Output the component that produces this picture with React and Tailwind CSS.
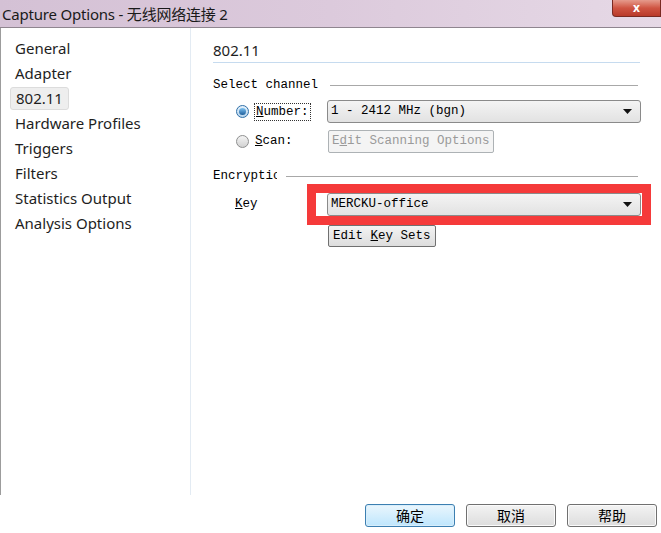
import React from 'react';

const sans = { fontFamily: '"Noto Sans", "Noto Sans CJK SC", sans-serif' };
const mono = { fontFamily: '"Liberation Mono", "Noto Sans CJK SC", monospace' };

const navItems = [
  'General',
  'Adapter',
  '802.11',
  'Hardware Profiles',
  'Triggers',
  'Filters',
  'Statistics Output',
  'Analysis Options',
];

function Radio({ checked }) {
  return (
    <span
      className={`w-[13px] h-[13px] rounded-full border flex items-center justify-center shrink-0 ${
        checked
          ? 'border-[#2f6fa8] bg-gradient-to-b from-[#e6f2fb] to-[#b9d6ee]'
          : 'border-[#8e8f8f] bg-gradient-to-b from-[#f4f4f4] to-[#d2d2d2]'
      }`}
    >
      {checked && (
        <span className="w-[7px] h-[7px] rounded-full bg-gradient-to-b from-[#7fc3f2] to-[#1d5f9c]" />
      )}
    </span>
  );
}

function Select({ value }) {
  return (
    <div className="flex-1 h-[23px] border border-[#8a8a8a] rounded-[3px] bg-gradient-to-b from-[#f4f4f4] to-[#e2e2e2] flex items-center pl-[3px] pr-[8px] text-[12.5px] text-black">
      <span className="flex-1">{value}</span>
      <svg width="9" height="5" viewBox="0 0 9 5">
        <path d="M0 0 L9 0 L4.5 5 Z" fill="#111" />
      </svg>
    </div>
  );
}

function DialogButton({ children, primary }) {
  return (
    <button
      type="button"
      className={`w-[90px] h-[23px] rounded-[3px] border text-[14px] text-black flex items-center justify-center ${
        primary
          ? 'border-[#3c7fb1] bg-gradient-to-b from-[#eaf6fd] to-[#bee6fd] shadow-[inset_0_0_0_1px_#d8eefb]'
          : 'border-[#707070] bg-gradient-to-b from-[#f3f3f3] to-[#dddddd] shadow-[inset_0_0_0_1px_#fbfbfb]'
      }`}
      style={sans}
    >
      {children}
    </button>
  );
}

export default function App() {
  return (
    <div className="w-[661px] h-[533px] flex flex-col overflow-hidden bg-white" style={sans}>
      <div className="h-[28px] shrink-0 flex bg-gradient-to-r from-[#d4c1d5] via-[#dccadc] to-[#e6d9e6] border-b border-[#8f858f]">
        <div className="pl-[2px] pt-[4px] text-[15px] leading-[20px] text-[#1a1a1a] tracking-[-0.2px]">
          Capture Options - 无线网络连接 2
        </div>
        <div className="ml-auto w-[49px] h-[17px] rounded-bl-[4px] border border-t-0 border-[#7a2a22] bg-gradient-to-b from-[#e59a8c] via-[#cf5442] to-[#b93a2a] flex items-center justify-center">
          <span className="text-white text-[12px] leading-none font-bold">x</span>
        </div>
      </div>

      <div className="flex-1 flex border-l border-[#9c9c9c]">
        <nav className="w-[190px] shrink-0 border-r border-[#e3ebf3] pt-[8px] pl-[9px]">
          {navItems.map((item) => (
            <div key={item} className="h-[25px] flex items-center">
              <span
                className={`px-[5px] h-[23px] flex items-center text-[15px] text-[#1e1e1e] rounded-[3px] ${
                  item === '802.11' ? 'bg-[#eeeeee] border border-[#dcdcdc] px-[4px]' : ''
                }`}
              >
                {item}
              </span>
            </div>
          ))}
        </nav>

        <div className="flex-1 flex flex-col pl-[22px] pr-[20px] pt-[11px]" style={mono}>
          <div className="h-[24px] border-b border-[#c6dbef] mr-[1px] flex items-center text-[15px] text-[#1e1e1e]" style={sans}>
            802.11
          </div>

          <div className="mt-[14px] h-[16px] flex items-center text-[12.5px] text-black">
            <span>Select channel</span>
            <span className="flex-1 ml-[12px] mr-[3px] h-px bg-[#a8a8a8]" />
          </div>

          <div className="mt-[7px] flex items-center text-[12.5px]">
            <div className="w-[114px] shrink-0 flex items-center pl-[23px] gap-[5px]">
              <Radio checked />
              <span className="border border-dotted border-[#333] px-[1px] leading-[16px]">
                <span className="underline">N</span>umber:
              </span>
            </div>
            <Select value="1 - 2412 MHz (bgn)" />
          </div>

          <div className="mt-[7px] flex items-center text-[12.5px]">
            <div className="w-[115px] shrink-0 flex items-center pl-[23px] gap-[6px]">
              <Radio />
              <span>
                <span className="underline">S</span>can:
              </span>
            </div>
            <div className="h-[23px] px-[3px] border border-[#adb2b5] rounded-[2px] bg-[#f4f4f4] text-[#9a9a9a] flex items-center">
              E<span className="underline">d</span>it Scanning Options
            </div>
          </div>

          <div className="mt-[15px] h-[16px] flex items-center text-[12.5px] text-black">
            <span className="w-[64px] overflow-hidden whitespace-nowrap">Encryption</span>
            <span className="flex-1 ml-[9px] mr-[3px] h-px bg-[#a8a8a8]" />
          </div>

          <div className="mt-[9px] flex items-center text-[12.5px]">
            <div className="w-[114px] shrink-0 pl-[22px]">
              <span className="underline">K</span>ey
            </div>
            <div className="relative flex-1 flex">
              <Select value="MERCKU-office" />
              <div className="absolute -top-[9px] -bottom-[9px] -left-[20px] -right-[10px] border-[9px] border-[#f53a3a] pointer-events-none" />
            </div>
          </div>

          <div className="mt-[9px] pl-[115px] flex text-[12.5px]">
            <div className="h-[22px] px-[4px] border border-[#707070] rounded-[2px] bg-gradient-to-b from-[#f3f3f3] to-[#dddddd] text-black flex items-center">
              Edit&nbsp;<span className="underline">K</span>ey Sets
            </div>
          </div>
        </div>
      </div>

      <div className="h-[38px] shrink-0 flex justify-end items-start pt-[9px] pr-[4px] gap-[11px]">
        <DialogButton primary>确定</DialogButton>
        <DialogButton>取消</DialogButton>
        <DialogButton>帮助</DialogButton>
      </div>
    </div>
  );
}
